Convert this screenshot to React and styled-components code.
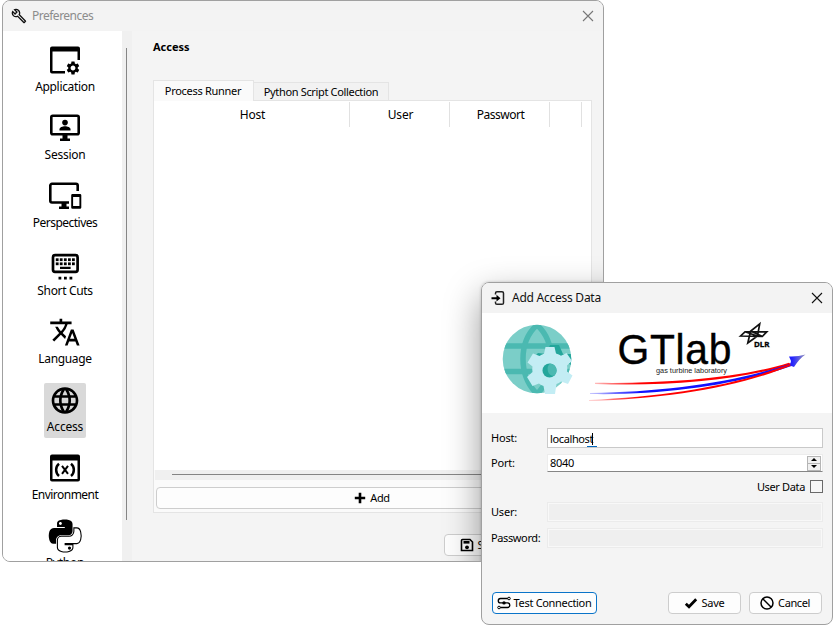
import React from 'react';
import styled, { createGlobalStyle } from 'styled-components';
import { MdOutlineBuild, MdTranslate, MdLanguage, MdSettings } from 'react-icons/md';

const GlobalStyle = createGlobalStyle`
  * { box-sizing: border-box; }
  body { margin: 0; background: #fff; overflow: hidden; }
  svg { display: block; flex: none; }
`;

const Desktop = styled.div`
  position: relative;
  width: 836px;
  height: 628px;
  background: #fff;
  color: #000;
  font: 11px/16px 'Noto Sans', 'Open Sans', sans-serif;
`;

const Window = styled.section`
  position: absolute;
  left: ${(p) => p.$x}px;
  top: ${(p) => p.$y}px;
  width: ${(p) => p.$w}px;
  height: ${(p) => p.$h}px;
  display: flex;
  flex-direction: column;
  overflow: hidden;
  background: #f4f4f4;
  border: 1px solid #a0a0a0;
  border-radius: 8px;
`;

const DropShadow = styled.div`
  position: absolute;
  left: 478px;
  top: 281px;
  width: 352px;
  height: 343px;
  border-radius: 8px;
  box-shadow: 0 14px 36px rgba(0, 0, 0, 0.4), 0 0 3px rgba(0, 0, 0, 0.2);
`;

const TitleBar = styled.header`
  flex: none;
  display: flex;
  align-items: center;
  height: 30px;
  padding: 0 9px 0 ${(p) => (p.$active ? 9 : 8)}px;
  background: #f3f3f3;
  color: ${(p) => (p.$active ? '#111' : '#8c8c8c')};
  font-size: 12px;
  letter-spacing: ${(p) => p.$ls || 0}px;
`;

const Title = styled.span`
  flex: 1;
  margin-left: 5px;
  white-space: nowrap;
`;

const Label = styled.span`
  white-space: nowrap;
  letter-spacing: ${(p) => p.$ls || 0}px;
`;

const Body = styled.div`
  flex: 1;
  display: flex;
  min-height: 0;
`;

const Sidebar = styled.nav`
  width: 119px;
  flex: none;
  display: flex;
  flex-direction: column;
  align-items: center;
  gap: 13px;
  padding: 12px 0 0 5px;
  background: #fff;
  overflow: hidden;
`;

const NavItem = styled.div`
  flex: none;
  display: flex;
  flex-direction: column;
  align-items: center;
  height: 55px;
  padding: 0 3px;
  border-radius: 2px;
  background: ${(p) => (p.$selected ? '#d9d9d9' : 'transparent')};
  font-size: 12px;
`;

const SideScroll = styled.div`
  width: 10px;
  flex: none;
  padding: 17px 0 0 4px;
  background: #f0f0f0;
`;

const SideThumb = styled.div`
  width: 1px;
  height: 472px;
  background: #858585;
`;

const Content = styled.main`
  flex: 1;
  display: flex;
  flex-direction: column;
  padding: 8px 11px 0 21px;
`;

const Heading = styled.h1`
  margin: 0 0 25px;
  font-size: 11px;
  line-height: 16px;
  font-weight: 700;
`;

const Tabs = styled.div`
  display: flex;
  align-items: flex-end;
  height: 20px;
`;

const Tab = styled.div`
  display: flex;
  justify-content: center;
  align-items: center;
  width: ${(p) => p.$w}px;
  height: ${(p) => (p.$active ? 21 : 18)}px;
  margin-bottom: ${(p) => (p.$active ? -1 : 0)}px;
  padding-right: ${(p) => (p.$active ? 1 : 0)}px;
  z-index: 1;
  border: 1px solid #e4e4e4;
  border-bottom: 0;
  border-left-width: ${(p) => (p.$active ? 1 : 0)}px;
  background: ${(p) => (p.$active ? '#fafafa' : '#f2f2f2')};
`;

const Pane = styled.div`
  display: flex;
  flex-direction: column;
  width: 439px;
  height: 413px;
  border: 1px solid #e4e4e4;
  background: #fafafa;
`;

const Table = styled.div`
  height: 369px;
  padding-top: 1px;
  background: #fff;
`;

const HeaderRow = styled.div`
  display: flex;
  height: 25px;
  font-size: 12px;
`;

const HeaderCell = styled.div`
  display: flex;
  align-items: center;
  justify-content: center;
  width: ${(p) => p.$w}px;
  padding-left: 2px;
  border-right: 1px solid #e1e1e1;
`;

const ScrollRow = styled.div`
  height: 10px;
  margin: 0 1px;
  padding: 4px 0 0 17px;
  background: #f0f0f0;
`;

const ScrollThumb = styled.div`
  height: 1px;
  background: #858585;
`;

const Button = styled.button`
  display: flex;
  align-items: center;
  justify-content: center;
  flex: none;
  gap: ${(p) => p.$gap ?? 4}px;
  width: ${(p) => p.$w}px;
  height: 22px;
  padding: 0 1px 0 0;
  margin: ${(p) => p.$m || 0};
  border: 1px solid ${(p) => (p.$focus ? '#0a74c9' : '#cdcdcd')};
  border-radius: 4px;
  background: #fdfdfd;
  color: #000;
  font: inherit;
`;

const Banner = styled.div`
  flex: none;
  height: 100px;
  background: #fff;
`;

const Form = styled.div`
  display: flex;
  flex-direction: column;
  padding: 15px 9px 0 9px;
`;

const FormRow = styled.label`
  display: flex;
  align-items: center;
  height: 20px;
  margin-bottom: ${(p) => p.$mb}px;
`;

const FieldName = styled.span`
  width: 56px;
  flex: none;
  white-space: nowrap;
  letter-spacing: ${(p) => p.$ls || 0}px;
`;

const Field = styled.div`
  display: flex;
  align-items: center;
  flex: 1;
  height: 20px;
  padding-left: 2px;
  border: 1px solid ${(p) => (p.$disabled ? '#ebebeb' : '#c9c9c9')};
  background: ${(p) => (p.$disabled ? '#efefef' : '#fff')};
  box-shadow: ${(p) => (p.$disabled ? 'inset 0 0 0 1px #f8f8f8' : 'none')};
`;

const HostText = styled.span`
  position: relative;
  margin-top: 2px;
  height: 16px;
  letter-spacing: -0.38px;
  &::before {
    content: '';
    position: absolute;
    right: 0;
    top: 2px;
    width: 1px;
    height: 12px;
    background: #000;
  }
  &::after {
    content: '';
    position: absolute;
    right: -4px;
    bottom: 0px;
    width: 10px;
    height: 1px;
    background: #0067c0;
  }
`;

const SpinField = styled.div`
  display: flex;
  align-items: center;
  justify-content: space-between;
  flex: 1;
  height: 18px;
  padding: 0 1px 0 2px;
  border: 1px solid #ececec;
  border-bottom-color: #868686;
  background: #fff;
`;

const Stepper = styled.div`
  display: flex;
  flex-direction: column;
  width: 14px;
  height: 15px;
  border: 1px solid #b5b5b5;
  background: #f0f0f0;
`;

const Step = styled.div`
  display: flex;
  flex: 1;
  align-items: center;
  justify-content: center;
  border-bottom: ${(p) => (p.$top ? '1px solid #b5b5b5' : '0')};
`;

const CheckRow = styled.label`
  display: flex;
  align-items: center;
  justify-content: flex-end;
  gap: 5px;
  height: 13px;
  margin-bottom: 9px;
`;

const CheckBox = styled.span`
  width: 13px;
  height: 13px;
  border: 1px solid #6a6a6a;
  background: #f7f7f7;
`;

const Footer = styled.footer`
  display: flex;
  align-items: center;
  margin-top: 44px;
  padding: 0 10px;
`;

const Spacer = styled.div`
  flex: 1;
`;

const Glyph = ({ size = 36, children }) => (
  <svg width={size} height={size} viewBox={`0 0 ${size} ${size}`} fill="none">{children}</svg>
);

const ApplicationIcon = () => (
  <Glyph>
    <path d="M5 3.5H31a2 2 0 0 1 2 2V17h-2.5V8.500h-25V28H18v2.5H5a2 2 0 0 1-2-2v-23a2 2 0 0 1 2-2z" fill="#000" />
    <MdSettings x="18" y="17" size="16" color="#000" />
  </Glyph>
);

const SessionIcon = () => (
  <Glyph>
    <rect x="4.3" y="4.8" width="27.4" height="18.4" rx="1.5" stroke="#000" strokeWidth="2.6" />
    <circle cx="18" cy="11.6" r="2.8" fill="#000" />
    <path d="M12.5 19.5v-1.3c0-2 3-3 5.500-3s5.500 1 5.500 3v1.300z" fill="#000" />
    <path d="M15.500 23h5v4.500h2.500V30H13v-2.500h2.500z" fill="#000" />
  </Glyph>
);

const PerspectivesIcon = () => (
  <Glyph>
    <path d="M22 23.500H5A1.700 1.700 0 0 1 3.300 21.800V6.500A1.700 1.700 0 0 1 5 4.800h24A1.700 1.700 0 0 1 30.700 6.500V12" stroke="#000" strokeWidth="2.6" />
    <path d="M14.500 23h5v4.500H22V30H12v-2.500h2.500z" fill="#000" />
    <path d="M25.500 15h7.500a1.300 1.300 0 0 1 1.300 1.300v12.200a1.300 1.300 0 0 1-1.300 1.300h-7.500a1.300 1.300 0 0 1-1.300-1.300V16.300A1.300 1.300 0 0 1 25.500 15zm.6 3v9h6.300v-9z" fill="#000" fillRule="evenodd" />
  </Glyph>
);

const ShortCutsIcon = () => (
  <Glyph>
    <rect x="6" y="8.200" width="24.600" height="16.600" rx="2" stroke="#000" strokeWidth="2.700" />
    {[8.8, 12.8, 16.9, 21, 25].map((x) => (
      <g key={x} fill="#000">
        <rect x={x} y="11.300" width="2.800" height="2.800" />
        <rect x={x} y="15.400" width="2.800" height="2.800" />
      </g>
    ))}
    <path d="M13 19.700h10.600v2.300H13z M11.500 29.800h2.800v2.700h-2.800z M17 29.800h2.800v2.700H17z M22.500 29.800h2.800v2.700h-2.800z" fill="#000" />
  </Glyph>
);

const LanguageIcon = () => (
  <Glyph><MdTranslate x="1.900" y="1.200" size="32" color="#000" /></Glyph>
);

const AccessIcon = () => (
  <Glyph><MdLanguage x="2" y="1.500" size="32" color="#000" /></Glyph>
);

const EnvironmentIcon = () => (
  <Glyph>
    <path d="M5 3.500h26a2 2 0 0 1 2 2v23a2 2 0 0 1-2 2H5a2 2 0 0 1-2-2v-23a2 2 0 0 1 2-2zm.5 6V28h25V9.500z" fill="#000" fillRule="evenodd" />
    <path d="M12 12.700c-3.800 3-3.800 9.300 0 12.300M24 12.700c3.800 3 3.800 9.300 0 12.300" stroke="#000" strokeWidth="2.500" />
    <path d="M15 14.800l6 8M21 14.800l-6 8" stroke="#000" strokeWidth="2" />
  </Glyph>
);

const PythonIcon = () => (
  <svg width="36" height="36" viewBox="-24 24 496 496" fill="#000">
    <path fillRule="evenodd" d="M167.800 248.100h106.800c29.700 0 53.400-24.500 53.400-54.300V91.900c0-29-24.400-50.700-53.400-55.600-35.800-5.900-74.700-5.600-106.800.1-45.200 8-53.400 24.700-53.400 55.600v40.700h106.900v13.600h-147c-31.100 0-58.300 18.700-66.800 54.200-9.800 40.700-10.200 66.100 0 108.600 7.600 31.600 25.700 54.200 56.800 54.200H101v-48.800c0-35.300 30.500-66.400 66.800-66.400zm-6.700-142.600c-11.100 0-20.100-9.100-20.100-20.300.1-11.300 9-20.400 20.100-20.400 11 0 20.100 9.200 20.100 20.400s-9 20.300-20.100 20.300z" />
    <path fill="#fff" stroke="#000" strokeWidth="15" d="M439.800 200.500c-7.700-30.900-22.300-54.200-53.400-54.200h-40.100v47.400c0 36.800-31.200 67.800-66.800 67.800H172.700c-29.200 0-53.400 25-53.400 54.300v101.800c0 29 25.200 46 53.400 54.300 33.800 9.900 66.300 11.700 106.800 0 26.900-7.800 53.400-23.500 53.400-54.300v-40.700H226.200v-13.600h160.200c31.100 0 42.600-21.700 53.400-54.200 11.200-33.500 10.700-65.700 0-108.600z" />
    <circle cx="286" cy="424" r="22" />
  </svg>
);

const CloseIcon = ({ color }) => (
  <Glyph size={12}><path d="M1 1l10 10M11 1L1 11" stroke={color} strokeWidth="1.100" /></Glyph>
);

const EnterIcon = () => (
  <Glyph size={16}>
    <path d="M4.500 4.500V3.300Q4.500 1.800 6 1.800H11Q12.500 1.800 12.500 3.300V13Q12.500 14.300 11 14.300H6Q4.500 14.300 4.500 13v-1.500" stroke="#222" strokeWidth="1.500" />
    <path d="M.5 7.200h5V4.800L9.500 8.200 5.500 11.600V9.200h-5z" fill="#000" />
  </Glyph>
);

const PlusIcon = () => (
  <Glyph size={12}><path d="M6 .8v10.400M.8 6h10.400" stroke="#000" strokeWidth="2.600" /></Glyph>
);

const FloppyIcon = () => (
  <Glyph size={14}>
    <path d="M2.500 1.500H10L12.500 4v8.500h-11v-10q0-1 1-1z" stroke="#000" strokeWidth="1.600" />
    <path d="M3.500 3h6v2.600h-6z" fill="#000" /><circle cx="7" cy="9.300" r="1.900" fill="#000" />
  </Glyph>
);

const ConnectionIcon = () => (
  <Glyph size={14}>
    <path d="M11 2.500H3.500a2.200 2.200 0 0 0 0 4.400h7a2.300 2.300 0 0 1 0 4.600H3" stroke="#000" strokeWidth="1.400" />
    <circle cx="12" cy="2.500" r="1.300" stroke="#000" fill="#fff" /><circle cx="2" cy="11.500" r="1.300" stroke="#000" fill="#fff" />
    <circle cx="7" cy="6.900" r="1.700" fill="#000" />
  </Glyph>
);

const CheckIcon = () => (
  <Glyph size={14}><path d="M1.800 7.800l3.200 3L12.200 3.200" stroke="#000" strokeWidth="2.800" /></Glyph>
);

const BlockIcon = () => (
  <Glyph size={14}>
    <circle cx="7" cy="7" r="6" stroke="#000" strokeWidth="1.500" /><path d="M3 3l8 8" stroke="#000" strokeWidth="1.500" />
  </Glyph>
);

const BannerArt = () => (
  <svg width="350" height="100" viewBox="482 313 350 100">
    <defs>
      <clipPath id="globe"><circle cx="537" cy="359" r="34.300" /></clipPath>
      <linearGradient id="red" x1="588" x2="793" y1="0" y2="0" gradientUnits="userSpaceOnUse">
        <stop offset="0" stopColor="#f00" stopOpacity=".15" /><stop offset=".25" stopColor="#f00" />
      </linearGradient>
      <linearGradient id="blue" x1="588" x2="793" y1="0" y2="0" gradientUnits="userSpaceOnUse">
        <stop offset="0" stopColor="#11f" stopOpacity=".2" /><stop offset=".25" stopColor="#11f" />
      </linearGradient>
      <linearGradient id="tip" x1="792" x2="806" y1="0" y2="0" gradientUnits="userSpaceOnUse">
        <stop offset="0" stopColor="#22f" /><stop offset="1" stopColor="#99b" />
      </linearGradient>
    </defs>
    <g clipPath="url(#globe)">
      <rect x="500" y="323" width="74" height="74" fill="#7bcec8" />
      <g fill="none" stroke="#4bb9b1" strokeWidth="5.500">
        <path d="M500 346h74M500 371.500h74" />
        <path d="M537 325c-9 8-14 20-14 34s5 26 14 35M537 325c9 8 14 20 14 34s-5 26-14 35" />
      </g>
      <path d="M550 345h9l4 9h9v12l-8-6-26-2-4-1 4-4 8 1z" fill="#23a69b" />
    </g>
    <path fill="#c3edf4" d="M545.500 347h9l1.500 6.500q3 .8 5 2.300l5.500-2.800 5.500 8-5 4.500q.8 2.500 0 6l5.500 4-4.500 8.500-7-2.500q-2 1.500-4.500 2.500l-1.500 10h-10l-1.500-8q-2.500-.8-4.500-2.500l-6.500 2.500-5.500-9 5.500-5q-.6-2.500 0-5.500l-5-4 5.500-9 6.500 2.500q2-1.400 4.500-2.300z" />
    <circle cx="549.500" cy="370.500" r="7" fill="#23a69b" />
    <path d="M550 363.500a7 7 0 0 1 4.500 12q-5 1-6.500-4t2-8z" fill="#4bb9b1" />
    <g transform="translate(617.500 363.800) scale(.95 1)">
      <text fontFamily="Liberation Sans, sans-serif" fontSize="43" textLength="120" stroke="#000" strokeWidth=".4">GTlab</text>
    </g>
    <text x="656" y="373.300" fontFamily="Liberation Sans, sans-serif" fontSize="7.500" textLength="71" lengthAdjust="spacingAndGlyphs" fill="#222">gas turbine laboratory</text>
    <g fill="none" stroke="#111" strokeWidth="1.700" strokeLinejoin="miter">
      <path d="M740.500 336l4.500-4.200h21.800l-4.500 4.700zM759.700 323.800l-9.200 7.500-2.700 11.700 9.700-7zM745 331.800l13 4.500M750.500 331l12 5.500" />
    </g>
    <text x="754" y="347" fontFamily="Noto Sans, sans-serif" fontWeight="700" fontSize="7.500" textLength="15.500" lengthAdjust="spacingAndGlyphs" stroke="#000" strokeWidth=".3">DLR</text>
    <path d="M595 382.800c70 1 142-4 194-20l2 1.600c-52 16.500-124 22-196 19.600z" fill="url(#red)" />
    <path d="M590 393c76-1 147-11 202-30l1 2.500c-55 19-128 30-203 28.500z" fill="url(#blue)" />
    <path d="M589 400c80-4 149-15 202-36.500l1 1.800c-54 22-124 33.500-203 35.700z" fill="url(#red)" />
    <path d="M789 356.500q8.500.5 16.500-2-6 4-11.500 12.500l-4-1.500 1-4.500z" fill="url(#tip)" />
  </svg>
);

const navItems = [
  { name: 'Application', Icon: ApplicationIcon, ls: -0.32 },
  { name: 'Session', Icon: SessionIcon, ls: -0.25 },
  { name: 'Perspectives', Icon: PerspectivesIcon, ls: -0.52 },
  { name: 'Short Cuts', Icon: ShortCutsIcon, ls: -0.35 },
  { name: 'Language', Icon: LanguageIcon, ls: -0.35 },
  { name: 'Access', Icon: AccessIcon, selected: true, ls: -0.2 },
  { name: 'Environment', Icon: EnvironmentIcon, ls: -0.52 },
  { name: 'Python', Icon: PythonIcon, ls: -0.25 },
];

const columns = [
  { name: 'Host', w: 196 },
  { name: 'User', w: 100 },
  { name: 'Passwort', w: 100, ls: -0.5 },
  { name: '', w: 32 },
];

export default function App() {
  return (
    <Desktop>
      <GlobalStyle />
      <Window $x={2} $y={0} $w={602} $h={562}>
        <TitleBar $ls={-0.5}>
          <MdOutlineBuild size={16} color="#111" />
          <Title>Preferences</Title>
          <CloseIcon color="#777" />
        </TitleBar>
        <Body>
          <Sidebar>
            {navItems.map(({ name, Icon, selected, ls }) => (
              <NavItem key={name} $selected={selected}>
                <Icon />
                <Label $ls={ls}>{name}</Label>
              </NavItem>
            ))}
          </Sidebar>
          <SideScroll><SideThumb /></SideScroll>
          <Content>
            <Heading>Access</Heading>
            <Tabs>
              <Tab $active $w={101}><Label $ls={-0.3}>Process Runner</Label></Tab>
              <Tab $w={135}><Label $ls={-0.34}>Python Script Collection</Label></Tab>
            </Tabs>
            <Pane>
              <Table>
                <HeaderRow>
                  {columns.map((c) => (
                    <HeaderCell key={c.name} $w={c.w}><Label $ls={c.ls ?? -0.2}>{c.name}</Label></HeaderCell>
                  ))}
                </HeaderRow>
              </Table>
              <ScrollRow><ScrollThumb /></ScrollRow>
              <Button $w={433} $m="7px 2px 0"><PlusIcon /><Label $ls={-0.4}>Add</Label></Button>
            </Pane>
            <Button $w={73} $m="21px 0 0 291px"><FloppyIcon /><Label $ls={-0.3}>Save</Label></Button>
          </Content>
        </Body>
        <DropShadow />
      </Window>

      <Window $x={481} $y={282} $w={352} $h={343}>
        <TitleBar $active $ls={-0.25}>
          <EnterIcon />
          <Title>Add Access Data</Title>
          <CloseIcon color="#111" />
        </TitleBar>
        <Banner><BannerArt /></Banner>
        <Form>
          <FormRow $mb={5}>
            <FieldName $ls={-0.2}>Host:</FieldName>
            <Field><HostText>localhost</HostText></Field>
          </FormRow>
          <FormRow $mb={7}>
            <FieldName $ls={-0.2}>Port:</FieldName>
            <SpinField>
              <Label $ls={-0.3}>8040</Label>
              <Stepper>
                <Step $top><svg width="6" height="3"><path d="M0 3L3 0l3 3z" /></svg></Step>
                <Step><svg width="6" height="3"><path d="M0 0h6L3 3z" /></svg></Step>
              </Stepper>
            </SpinField>
          </FormRow>
          <CheckRow><Label $ls={-0.35}>User Data</Label><CheckBox /></CheckRow>
          <FormRow $mb={6}><FieldName $ls={-0.2}>User:</FieldName><Field $disabled /></FormRow>
          <FormRow $mb={0}><FieldName $ls={-0.38}>Password:</FieldName><Field $disabled /></FormRow>
        </Form>
        <Footer>
          <Button $focus $w={105} $gap={3}><ConnectionIcon /><Label $ls={-0.32}>Test Connection</Label></Button>
          <Spacer />
          <Button $w={73} $m="0 8px 0 0"><CheckIcon /><Label $ls={-0.3}>Save</Label></Button>
          <Button $w={73}><BlockIcon /><Label $ls={-0.4}>Cancel</Label></Button>
        </Footer>
      </Window>
    </Desktop>
  );
}
